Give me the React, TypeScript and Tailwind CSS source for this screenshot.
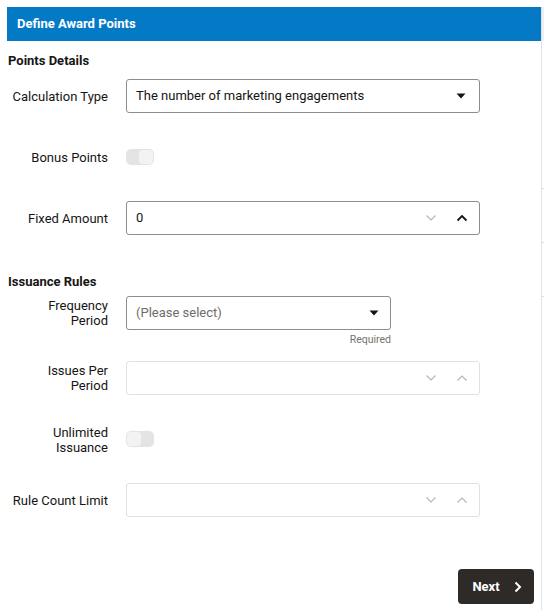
import React from "react";

const font = { fontFamily: 'Roboto, "Liberation Sans", Arial, sans-serif' };

function Caret() {
  return (
    <svg width="10" height="6" viewBox="0 0 10 6" className="shrink-0">
      <path d="M0.5 0.5 L9.5 0.5 L5 5.5 Z" fill="#161513" />
    </svg>
  );
}

function Chevron({ up, color }: { up?: boolean; color: string }) {
  return (
    <svg width="12" height="8" viewBox="0 0 12 8" className="shrink-0">
      <polyline
        points={up ? "1.5,6.5 6,2 10.5,6.5" : "1.5,1.5 6,6 10.5,1.5"}
        fill="none"
        stroke={color}
        strokeWidth={up && color === "#161513" ? 1.8 : 1.2}
      />
    </svg>
  );
}

function Label({ children }: { children: React.ReactNode }) {
  return (
    <div className="w-[100px] shrink-0 whitespace-nowrap text-right text-[13px] leading-[15px] text-[#161513]">
      {children}
    </div>
  );
}

function Switch({ on }: { on?: boolean }) {
  return (
    <div
      className={`flex h-[16px] w-[28px] items-center rounded-[5px] bg-[#e4e4e4] px-[1px] ${
        on ? "justify-end" : "justify-start"
      }`}
    >
      <div className="h-[14px] w-[14px] rounded-[4px] bg-[#f3f3f3]" />
    </div>
  );
}

function Stepper({ value, active }: { value?: string; active?: boolean }) {
  return (
    <div
      className={`flex h-[34px] w-[354px] items-center rounded-[3px] border pl-[9px] pr-[11px] ${
        active ? "border-[#8f8c89]" : "border-[#e2e1df]"
      }`}
    >
      <span className="flex-1 text-[13px] text-[#161513]">{value}</span>
      <div className="flex items-center gap-[19px]">
        <Chevron color="#b9b7b4" />
        <Chevron up color={active ? "#161513" : "#b9b7b4"} />
      </div>
    </div>
  );
}

export default function App() {
  return (
    <div className="h-[616px] w-[544px] overflow-hidden bg-white" style={font}>
      <div className="flex pl-[7px] pt-[7px]">
        <div className="flex h-[603px] w-[534px] flex-col">
          <div className="flex h-[34px] items-center bg-[#0479c5] px-[10px] text-[13px] font-bold text-white">
            Define Award Points
          </div>
          <div className="flex flex-1 flex-col pl-[1px]">
            <div className="mt-[12px] text-[13px] font-bold leading-[16px] text-[#161513]">
              Points Details
            </div>

            <div className="mt-[10px] flex h-[34px] items-center gap-[18px]">
              <Label>Calculation Type</Label>
              <div className="flex h-[34px] w-[354px] items-center rounded-[3px] border border-[#8f8c89] pl-[9px] pr-[13px]">
                <span className="flex-1 text-[13px] text-[#161513]">
                  The number of marketing engagements
                </span>
                <Caret />
              </div>
            </div>

            <div className="mt-[27px] flex h-[34px] items-center gap-[18px]">
              <Label>Bonus Points</Label>
              <Switch on />
            </div>

            <div className="mt-[27px] flex h-[34px] items-center gap-[18px]">
              <Label>Fixed Amount</Label>
              <Stepper value="0" active />
            </div>

            <div className="mt-[39px] text-[13px] font-bold leading-[16px] text-[#161513]">
              Issuance Rules
            </div>

            <div className="mt-[6px] flex h-[34px] items-center gap-[18px]">
              <Label>
                Frequency
                <br />
                Period
              </Label>
              <div className="flex h-[34px] w-[265px] items-center rounded-[3px] border border-[#8f8c89] pl-[9px] pr-[11px]">
                <span className="flex-1 text-[13px] text-[#6f6c69]">(Please select)</span>
                <Caret />
              </div>
            </div>
            <div className="mt-[3px] flex">
              <div className="w-[383px] text-right text-[10.5px] leading-[14px] text-[#75726e]">
                Required
              </div>
            </div>

            <div className="mt-[14px] flex h-[34px] items-center gap-[18px]">
              <Label>
                Issues Per
                <br />
                Period
              </Label>
              <Stepper />
            </div>

            <div className="mt-[27px] flex h-[34px] items-center gap-[18px]">
              <div className="mt-[1px]">
                <Label>
                  Unlimited
                  <br />
                  Issuance
                </Label>
              </div>
              <Switch />
            </div>

            <div className="mt-[27px] flex h-[34px] items-center gap-[18px]">
              <Label>Rule Count Limit</Label>
              <Stepper />
            </div>

            <div className="mt-[52px] flex justify-end pr-[7px]">
              <button className="flex h-[35px] w-[76px] items-center justify-center gap-[14px] rounded-[4px] bg-[#2d2a27] pl-[2px] text-[13px] font-bold text-white">
                <span>Next</span>
                <svg width="8" height="12" viewBox="0 0 8 12">
                  <polyline points="1.5,1.5 6,6 1.5,10.5" fill="none" stroke="#ffffff" strokeWidth="2" />
                </svg>
              </button>
            </div>
          </div>
        </div>
        <div className="flex h-[603px] w-[3px] flex-col rounded-br-[3px] border-l border-[#e2e2e2]">
          <div className="h-[34px] bg-[#efefef]" />
          <div className="mt-[147px] h-[1px] bg-[#dcdcdc]" />
          <div className="mt-[53px] h-[1px] bg-[#dcdcdc]" />
          <div className="mt-[53px] h-[1px] bg-[#dcdcdc]" />
        </div>
      </div>
    </div>
  );
}
